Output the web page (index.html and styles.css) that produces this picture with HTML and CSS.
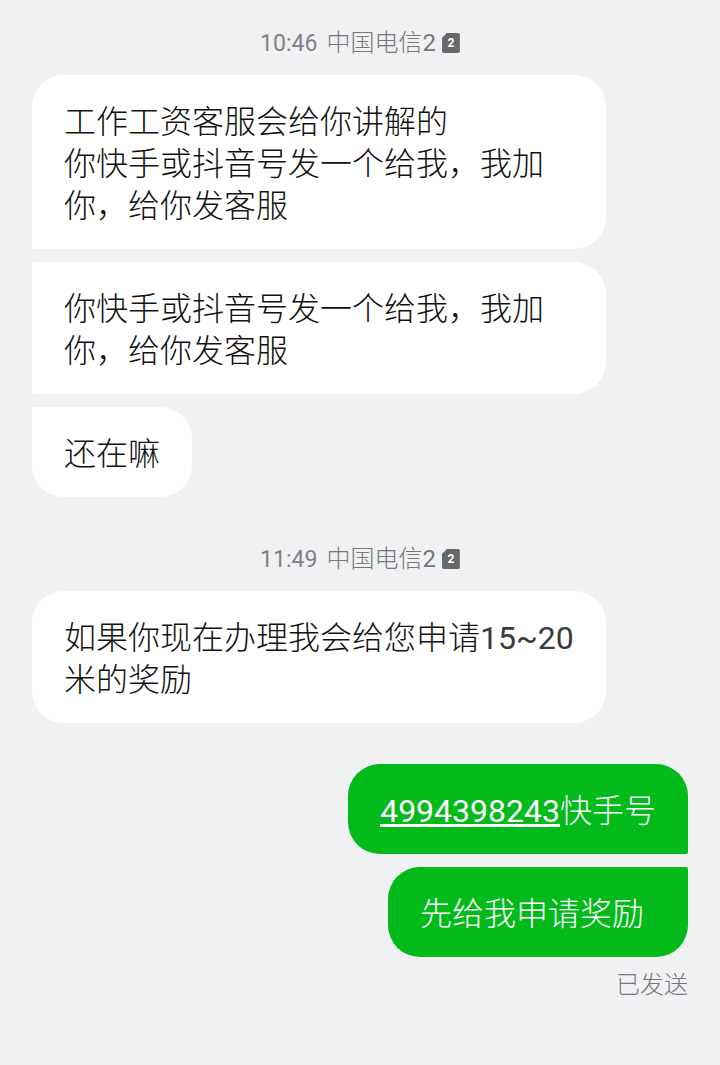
FILE: index.html
```html
<!DOCTYPE html>
<html lang="zh-CN">

<head>
    <meta charset="UTF-8">
    <meta name="viewport" content="width=device-width, initial-scale=1.0">
    <title>短信</title>
    <link rel="stylesheet" href="styles.css">
</head>

<body>

    <div class="thread">
        <div class="stamp">
            <span class="num time">10:46</span>
            <span>中国电信<span class="num">2</span></span>
            <span class="sim">2</span>
        </div>
        <div class="bubble in first">工作工资客服会给你讲解的<br>你快手或抖音号发一个给我，我加你，给你发客服</div>
        <div class="bubble in">你快手或抖音号发一个给我，我加你，给你发客服</div>
        <div class="bubble in">还在嘛</div>

        <div class="stamp later">
            <span class="num time">11:49</span>
            <span>中国电信<span class="num">2</span></span>
            <span class="sim">2</span>
        </div>
        <div class="bubble in first">如果你现在办理我会给您申请<span class="num">15~20</span>米的奖励</div>

        <div class="bubble out outgoing-start"><a class="num" href="#">4994398243</a>快手号</div>
        <div class="bubble out wide-tail">先给我申请奖励</div>
        <div class="status">已发送</div>
    </div>

</body>

</html>
```

FILE: styles.css
```css
body {
    margin: 0;
    background-color: #eff1f3;
    font-family: Roboto, 'Noto Sans CJK SC', sans-serif;
    font-weight: 300;
}

.thread {
    display: flex;
    flex-direction: column;
    padding: 27px 32px 0;
}

.num {
    font-weight: 400;
}

.stamp {
    display: flex;
    justify-content: center;
    align-items: baseline;
    gap: 9px;
    height: 32px;
    margin-bottom: 16px;
    font-size: 24px;
    line-height: 32px;
    color: #75777a;
}

.stamp.later {
    margin-top: 33px;
}

.time {
    font-size: 23px;
    color: #808285;
}

.sim {
    align-self: center;
    width: 18px;
    height: 20px;
    margin-left: -3px;
    background-color: #666869;
    border-radius: 2px;
    clip-path: polygon(5px 0, 100% 0, 100% 100%, 0 100%, 0 5px);
    color: #fff;
    font-size: 12px;
    font-weight: 700;
    line-height: 20px;
    text-align: center;
}

.bubble {
    box-sizing: border-box;
    max-width: 574px;
    padding: 26px 32px 22px;
    margin-bottom: 13px;
    font-size: 32px;
    line-height: 42px;
}

.in {
    align-self: flex-start;
    background-color: #fff;
    color: #111;
    border-radius: 2px 32px 32px 2px;
}

.in .num {
    color: #3a3a3a;
}

.in.first {
    border-top-left-radius: 32px;
}

.in:has(+ .stamp),
.in:has(+ .out) {
    border-bottom-left-radius: 32px;
}

.out {
    align-self: flex-end;
    background-color: #02ba1a;
    color: #fff;
    border-radius: 32px 2px 2px 32px;
}

.out:has(+ .status) {
    border-bottom-right-radius: 32px;
}

.outgoing-start {
    margin-top: 28px;
    border-top-right-radius: 32px;
}

.wide-tail {
    padding-right: 44px;
}

.out a {
    color: #fff;
}

.status {
    align-self: flex-end;
    margin-top: -1px;
    font-size: 24px;
    line-height: 32px;
    color: #75777a;
}
```
